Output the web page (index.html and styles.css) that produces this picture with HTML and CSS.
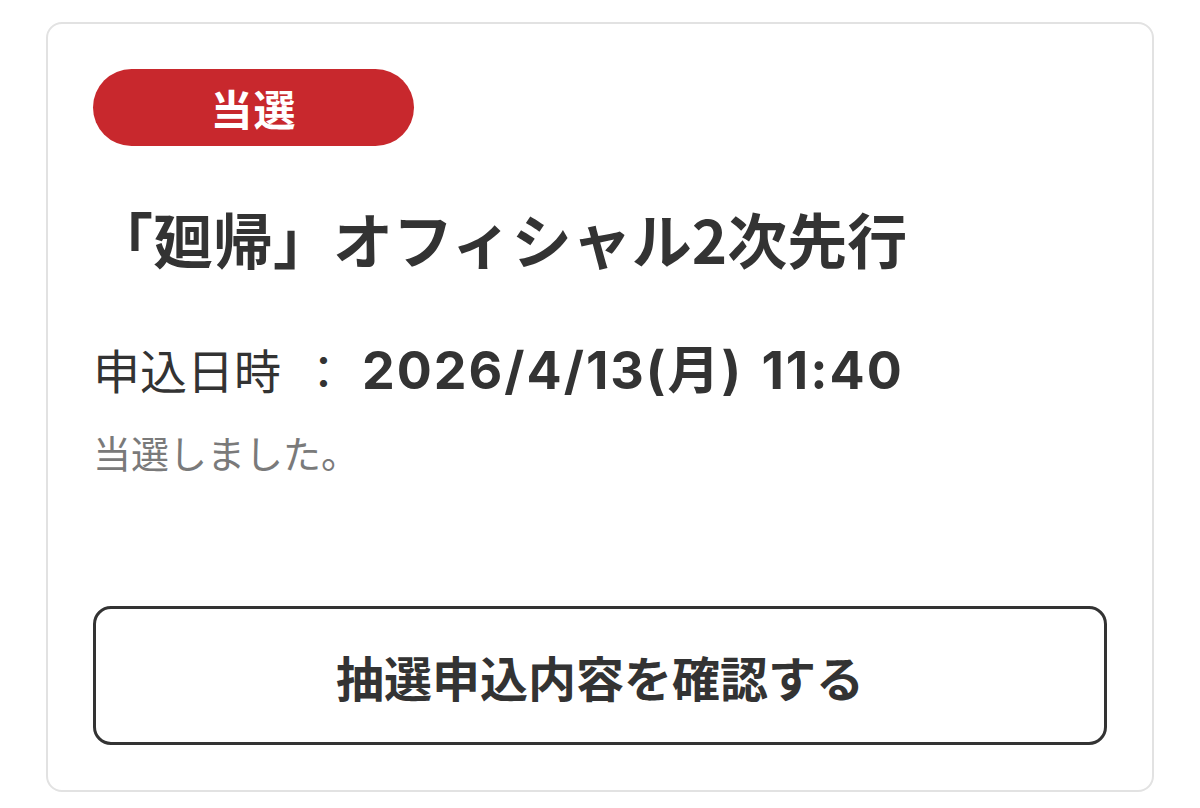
FILE: index.html
```html
<!DOCTYPE html>
<html lang="ja">
<head>
<meta charset="utf-8">
<title>当選</title>
<link rel="stylesheet" href="styles.css">
</head>
<body>
<div class="card">
  <div class="badge">当選</div>
  <h2 class="title">「廻帰」オフィシャル2次先行</h2>
  <div class="row">
    <span class="label">申込日時</span>
    <span class="colon">：</span>
    <span class="date">2026/4/13(月) 11:40</span>
  </div>
  <p class="note">当選しました。</p>
  <div class="button">抽選申込内容を確認する</div>
</div>
</body>
</html>
```
FILE: styles.css
```css
html, body {
  margin: 0;
  padding: 0;
  background: #ffffff;
}
body {
  font-family: "Noto Sans CJK JP", "Noto Sans", sans-serif;
  color: #333333;
}
.card {
  box-sizing: border-box;
  margin: 22px 0 0 46px;
  width: 1108px;
  height: 770px;
  border: 2px solid #e2e2e2;
  border-radius: 16px;
  padding: 45px;
  display: flex;
  flex-direction: column;
  align-items: flex-start;
}
.badge {
  width: 321px;
  height: 77px;
  border-radius: 39px;
  background: #c8282d;
  color: #ffffff;
  font-size: 42px;
  font-weight: 700;
  line-height: 1;
  display: flex;
  align-items: center;
  justify-content: center;
  letter-spacing: 1px;
}
.title {
  margin: 52px 0 0 0;
  font-size: 60px;
  font-weight: 700;
  line-height: 80px;
  color: #333333;
}
.row {
  margin-top: 56px;
  display: flex;
  align-items: baseline;
  line-height: 70px;
  height: 70px;
}
.label {
  font-size: 47px;
  font-weight: 400;
}
.colon {
  font-size: 47px;
  margin-left: 19px;
}
.date {
  margin-left: 15px;
  font-family: "Inter", "Noto Sans CJK JP", sans-serif;
  font-size: 52px;
  font-weight: 700;
  letter-spacing: 2px;
  word-spacing: 4px;
}
.note {
  margin: 23px 0 0 0;
  font-size: 38px;
  line-height: 50px;
  color: #7a7a7a;
}
.button {
  margin-top: auto;
  box-sizing: border-box;
  width: 100%;
  height: 139px;
  border: 3px solid #333333;
  border-radius: 18px;
  display: flex;
  align-items: center;
  justify-content: center;
  font-size: 48px;
  font-weight: 700;
  color: #333333;
}
```
